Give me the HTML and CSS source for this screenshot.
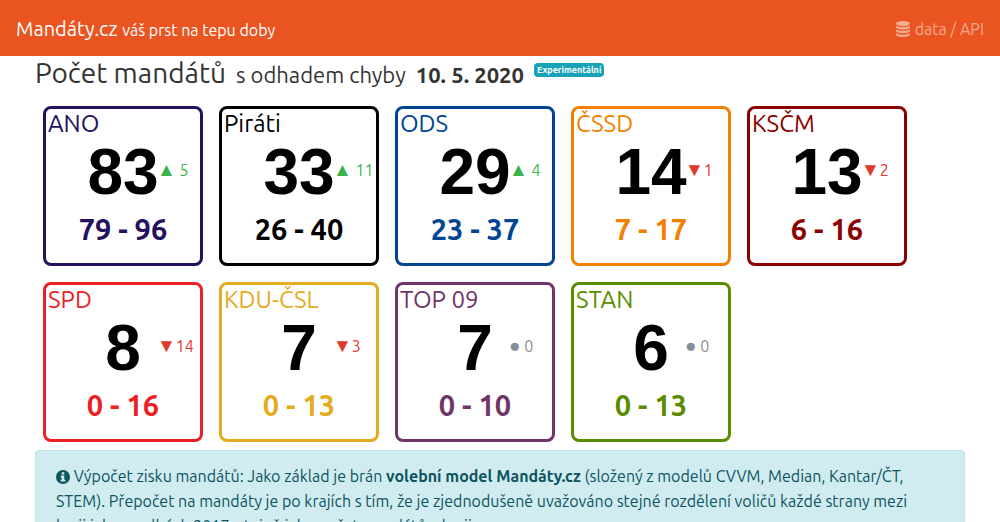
FILE: index.html
```
<!DOCTYPE html>
<html lang="cs">
<head>
<meta charset="utf-8">
<meta name="viewport" content="width=device-width, initial-scale=1">
<title>Mandáty.cz</title>
<link rel="stylesheet" href="styles.css">
</head>
<body>
<nav class="navbar">
  <a class="brand" href="#">Mandáty.cz <small class="tagline">váš prst na tepu doby</small></a>
  <a class="nav-link" href="#">
    <svg class="icon-db" viewBox="0 0 14 16" aria-hidden="true">
      <ellipse cx="7" cy="2.6" rx="7" ry="2.6"/>
      <path d="M0 4.4C2.5 6.6 11.500 6.600 14 4.400V6.200C14 9.200 0 9.200 0 6.200Z"/>
      <path d="M0 8.200C2.500 10.400 11.500 10.400 14 8.200V10C14 13 0 13 0 10Z"/>
      <path d="M0 12C2.500 14.200 11.500 14.200 14 12V13.400C14 16.800 0 16.800 0 13.400Z"/>
    </svg>
    <span>data / API</span>
  </a>
</nav>
<main class="container">
  <h1 class="title">
    <span>Počet mandátů</span>
    <small class="subtitle">s odhadem chyby</small>
    <strong class="date">10. 5. 2020</strong>
    <span class="badge">Experimentální</span>
  </h1>
  <section class="cards">
    <article class="card ano"><h2 class="party">ANO</h2><div class="seats"><strong class="number">83</strong><span class="delta up"><span class="mark">▲</span> 5</span></div><p class="range">79 - 96</p></article>
    <article class="card pirati"><h2 class="party">Piráti</h2><div class="seats"><strong class="number">33</strong><span class="delta up"><span class="mark">▲</span> 11</span></div><p class="range">26 - 40</p></article>
    <article class="card ods"><h2 class="party">ODS</h2><div class="seats"><strong class="number">29</strong><span class="delta up"><span class="mark">▲</span> 4</span></div><p class="range">23 - 37</p></article>
    <article class="card cssd"><h2 class="party">ČSSD</h2><div class="seats"><strong class="number">14</strong><span class="delta down"><span class="mark">▼</span>1</span></div><p class="range">7 - 17</p></article>
    <article class="card kscm"><h2 class="party">KSČM</h2><div class="seats"><strong class="number">13</strong><span class="delta down"><span class="mark">▼</span>2</span></div><p class="range">6 - 16</p></article>
    <article class="card spd"><h2 class="party">SPD</h2><div class="seats"><strong class="number">8</strong><span class="delta down"><span class="mark">▼</span>14</span></div><p class="range">0 - 16</p></article>
    <article class="card kdu"><h2 class="party">KDU-ČSL</h2><div class="seats"><strong class="number">7</strong><span class="delta down"><span class="mark">▼</span>3</span></div><p class="range">0 - 13</p></article>
    <article class="card top"><h2 class="party">TOP 09</h2><div class="seats"><strong class="number">7</strong><span class="delta same"><span class="mark">●</span> 0</span></div><p class="range">0 - 10</p></article>
    <article class="card stan"><h2 class="party">STAN</h2><div class="seats"><strong class="number">6</strong><span class="delta same"><span class="mark">●</span> 0</span></div><p class="range">0 - 13</p></article>
  </section>
  <div class="alert">
    <svg class="icon-info" viewBox="0 0 14 14" aria-hidden="true"><circle cx="7" cy="7" r="7"/><path class="hole" d="M5.700 2.200h2.600v2.200H5.700zM4.800 5.600h3.500v4.200h1v1.800H4.700V9.800h1V7.400h-.9z"/></svg>
    Výpočet zisku mandátů: Jako základ je brán <strong>volební model Mandáty.cz</strong> (složený z modelů CVVM, Median, Kantar/ČT, STEM). Přepočet na mandáty je po krajích s tím, že je zjednodušeně uvažováno stejné rozdělení voličů každé strany mezi kraji jako v volbách 2017, stejně jako počet mandátů v kraji.
  </div>
</main>
</body>
</html>
```
FILE: styles.css
```
* { box-sizing: border-box; }
body {
  margin: 0;
  font-family: Ubuntu, "Noto Sans", sans-serif;
  font-size: 16px;
  line-height: 24px;
  color: #333;
  background: #fff;
}
a { text-decoration: none; }
.navbar {
  display: flex;
  align-items: center;
  justify-content: space-between;
  padding: 14px 16px 12px;
  background: #e95420;
}
.brand { font-size: 20px; line-height: 30px; color: #fff; }
.tagline { font-size: 16px; line-height: 16px; }
.nav-link {
  display: flex;
  align-items: center;
  gap: 5px;
  color: rgba(255, 255, 255, 0.5);
}
.icon-db { width: 14px; height: 16px; fill: currentColor; }
.container { padding: 0 35px; }
.title {
  display: flex;
  align-items: baseline;
  gap: 10px;
  margin: 0;
  font-size: 28px;
  font-weight: 400;
  line-height: 34px;
  white-space: nowrap;
}
.subtitle, .date { font-size: 22px; }
.badge {
  align-self: flex-start;
  margin-top: 7px;
  padding: 0 3px;
  border-radius: 4px;
  background: #17a2b8;
  color: #fff;
  font-size: 9px;
  font-weight: 700;
  line-height: 14px;
}
.cards {
  display: grid;
  grid-template-columns: repeat(auto-fill, 160px);
  gap: 16px;
  padding: 14px 8px 8px;
}
.card {
  height: 160px;
  border: 3px solid;
  border-radius: 8px;
}
.party {
  margin: 0;
  padding: 0 2px;
  font-size: 24px;
  font-weight: 400;
  line-height: 30px;
}
.seats {
  display: grid;
  grid-template-columns: 41px 72px 41px;
  align-items: center;
}
.number {
  grid-column: 2;
  text-align: center;
  font-family: "Liberation Sans", Arial, sans-serif;
  font-size: 64px;
  line-height: 66px;
  color: #000;
}
.delta { padding-bottom: 4px; margin-left: -2px; white-space: nowrap; }
.mark {
  font-family: "Liberation Sans", Arial, sans-serif;
  font-size: 19px;
  line-height: 16px;
}
.up { color: #38b44a; }
.down { color: #df382c; }
.same { color: #868e96; }
.range {
  margin: 0;
  text-align: center;
  font-size: 29px;
  font-weight: 700;
  line-height: 48px;
}
.ano { color: #261060; }
.pirati { color: #000; }
.ods { color: #004494; }
.cssd { color: #f27f00; }
.kscm { color: #8b0000; }
.spd { color: #eb1f26; }
.kdu { color: #e5ab1f; }
.top { color: #703468; }
.stan { color: #5c8c00; }
.alert {
  padding: 13px 28px 13px 20px;
  border: 1px solid #bee5eb;
  border-radius: 4px;
  background: #d1ecf1;
  color: #0c5460;
  line-height: 25px;
}
.icon-info { width: 14px; height: 14px; vertical-align: -2px; fill: currentColor; }
.hole { fill: #d1ecf1; }
```
